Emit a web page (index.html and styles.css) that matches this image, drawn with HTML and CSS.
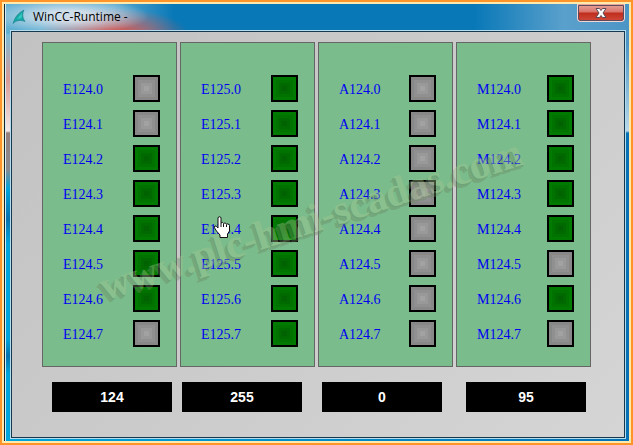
FILE: index.html
```html
<!DOCTYPE html>
<html lang="es">
<head>
  <meta charset="UTF-8" />
  <meta name="viewport" content="width=device-width, initial-scale=1.0"/>
  <title>WinCC-Runtime -</title>
  <link rel="stylesheet" href="styles.css">
</head>
<body>
  <div class="window">
    <header class="titlebar">
      <svg class="logo" viewBox="0 0 14 16" aria-hidden="true">
        <path d="M12 1 C6 4 3 8 1 14.500 C4 11.500 8 10.500 13 12.500 C10.500 9 10 5 12 1 Z" fill="#19a7a5" stroke="#187d8c" stroke-width="0.600"/>
        <path d="M10 4 L5 10 L9.500 9 Z" fill="#35cdc1"/>
      </svg>
      <h1>WinCC-Runtime -</h1>
      <button class="close" type="button" aria-label="Cerrar">
        <svg viewBox="0 0 12 10" aria-hidden="true">
          <path d="M1 0.500 H4.500 L6 2.500 L7.500 0.500 H11 L8 5 L11 9.500 H7.500 L6 7.500 L4.500 9.500 H1 L4 5 Z" fill="#fff" stroke="#5b4a55" stroke-width="1"/>
        </svg>
      </button>
    </header>

    <main class="client">
      <div class="panels" id="panels"></div>
      <div class="values" id="values"></div>
      <div class="watermark">www.plc-hmi-scadas.com</div>
      <svg class="cursor" viewBox="0 0 18 22" aria-hidden="true">
        <path d="M5 1.500 Q6.500 0 8 1.500 V7 Q9.500 5.500 10.500 7.500 Q12 6 13.500 8 Q15.500 7 16.500 9.500 V15 L14.500 18 V21.500 H7 V19 L3.500 15 L1 11 Q1.500 9 3.500 10.500 L5 12 Z" fill="#fff" stroke="#111" stroke-width="1"/>
        <path d="M8 7 V11 M10.500 8 V11 M13.500 8.500 V11" fill="none" stroke="#111" stroke-width="1"/>
      </svg>
    </main>
  </div>

  <script>
    // bits are listed from .0 to .7
    const bytes = [
      { name: "E124", bits: "00111110", value: 124 },
      { name: "E125", bits: "11111111", value: 255 },
      { name: "A124", bits: "00000000", value: 0 },
      { name: "M124", bits: "11111010", value: 95 }
    ];

    const panels = document.getElementById("panels");
    const values = document.getElementById("values");

    bytes.forEach(byte => {
      const list = document.createElement("ul");
      list.className = "panel";
      [...byte.bits].forEach((bit, i) => {
        const li = document.createElement("li");
        li.innerHTML = `<span class="tag">${byte.name}.${i}</span><span class="led ${bit === "1" ? "on" : ""}"></span>`;
        list.appendChild(li);
      });
      panels.appendChild(list);

      const out = document.createElement("output");
      out.textContent = byte.value;
      values.appendChild(out);
    });
  </script>
</body>
</html>
```
FILE: styles.css
```css
:root {
  --panel: #7abc8c;
  --line: #666;
  --label: #0000f0;
}

* {
  box-sizing: border-box;
}

body {
  margin: 0;
  padding: 2px;
  background: #ff9429;
}

.window {
  border: 2px solid #ffe9ad;
  padding: 0 4px 3px 7px;
  box-shadow: inset 1px 0 #14242e, inset 2px 0 #d5ecf4;
  background:
    radial-gradient(ellipse 80px 18px at 65px 12px, rgba(225, 230, 238, 0.85) 30%, transparent),
    radial-gradient(ellipse 75px 26px at 110px 30px, #c65c5c 20%, rgba(198, 92, 92, 0)) top / 100% 30px no-repeat,
    linear-gradient(to right, #62b1d3 0, #58a9d0 110px, #0878b7 170px, #0878b7 470px, #5aa0cc 560px, #4b95c6 100%) top / 100% 30px no-repeat,
    linear-gradient(to bottom, #7abbd6 30px, #d99a96 75px, #f2e8e8 127px, #97807c 129px, #8a8a90 165px, #00a4dc 185px, #0672b0 215px, #00a4dc 240px, #00a4dc 335px, #0672b0 352px, #00a4dc 370px) left / 10px 100% no-repeat,
    linear-gradient(to bottom, #4b95c6 40px, #b8d8ea 127px, #0672b5 129px) right / 10px 100% no-repeat,
    linear-gradient(to right, #00a4dc, #0672b5);
}

.titlebar {
  display: flex;
  align-items: flex-start;
  height: 27px;
}

.logo {
  width: 14px;
  height: 16px;
  margin: 5px 7px 0 1px;
}

h1 {
  flex: 1;
  margin: 4px 0 0;
  font: 12px/18px "Open Sans", "Noto Sans", sans-serif;
  color: #000;
}

.close {
  display: flex;
  align-items: center;
  justify-content: center;
  width: 48px;
  height: 18px;
  padding: 0;
  border: 1px solid #f3d5d3;
  border-top: none;
  border-radius: 0 0 4px 4px;
  outline: 1px solid #5d4a5a;
  outline-offset: -2px;
  background: linear-gradient(#e9a79e, #d9736a 48%, #bf2c1c 52%, #cf4a3b);
}

.close svg {
  width: 12px;
  height: 10px;
}

.client {
  position: relative;
  padding: 10px 33px 25px 30px;
  border: 1px solid #17394f;
  outline: 1px solid #b4dcec;
  background: linear-gradient(135deg, #c2c2c2, #cbcbcb 50%, #d5d5d5);
}

.panels {
  display: grid;
  grid-template-columns: repeat(4, 1fr);
  gap: 3px;
}

.panel {
  margin: 0;
  padding: 28px 16px 15px 20px;
  border: 1px solid var(--line);
  background: var(--panel);
  list-style: none;
}

.panel li {
  display: flex;
  align-items: center;
  justify-content: space-between;
  height: 35px;
  font: 14px/16px "Liberation Serif", serif;
  color: var(--label);
}

.tag {
  padding-top: 2px;
}

.led {
  width: 27px;
  height: 27px;
  border: 2px solid #000;
  background:
    linear-gradient(#a2a2a2, #a2a2a2) center / 5px 5px no-repeat,
    linear-gradient(#999, #999) center / 11px 11px no-repeat,
    linear-gradient(#909090, #909090) center / 17px 17px no-repeat,
    #888;
}

.led.on {
  background:
    linear-gradient(#006200, #006200) center / 5px 5px no-repeat,
    linear-gradient(#006a00, #006a00) center / 11px 11px no-repeat,
    linear-gradient(#007200, #007200) center / 17px 17px no-repeat,
    #007a00;
}

.values {
  display: grid;
  grid-template-columns: 130fr 140fr 144fr 120fr;
  margin: 15px 5px 0 10px;
}

.values output {
  width: 120px;
  background: #000;
  color: #fff;
  font: bold 14px/30px "Liberation Sans", Arial, sans-serif;
  text-align: center;
}

/* overlays */
.watermark {
  position: absolute;
  left: 96px;
  top: 230px;
  transform: rotate(-18deg);
  transform-origin: left bottom;
  font: bold 41px/48px "Liberation Serif", serif;
  white-space: nowrap;
  color: #a4c890;
  text-shadow: -1px 1px #5c7f5c, -2px 2px #6c8a62, -4px 3px #6c8a62;
  opacity: 0.4;
  pointer-events: none;
}

.cursor {
  position: absolute;
  left: 201px;
  top: 184px;
  width: 18px;
  height: 22px;
}
```
